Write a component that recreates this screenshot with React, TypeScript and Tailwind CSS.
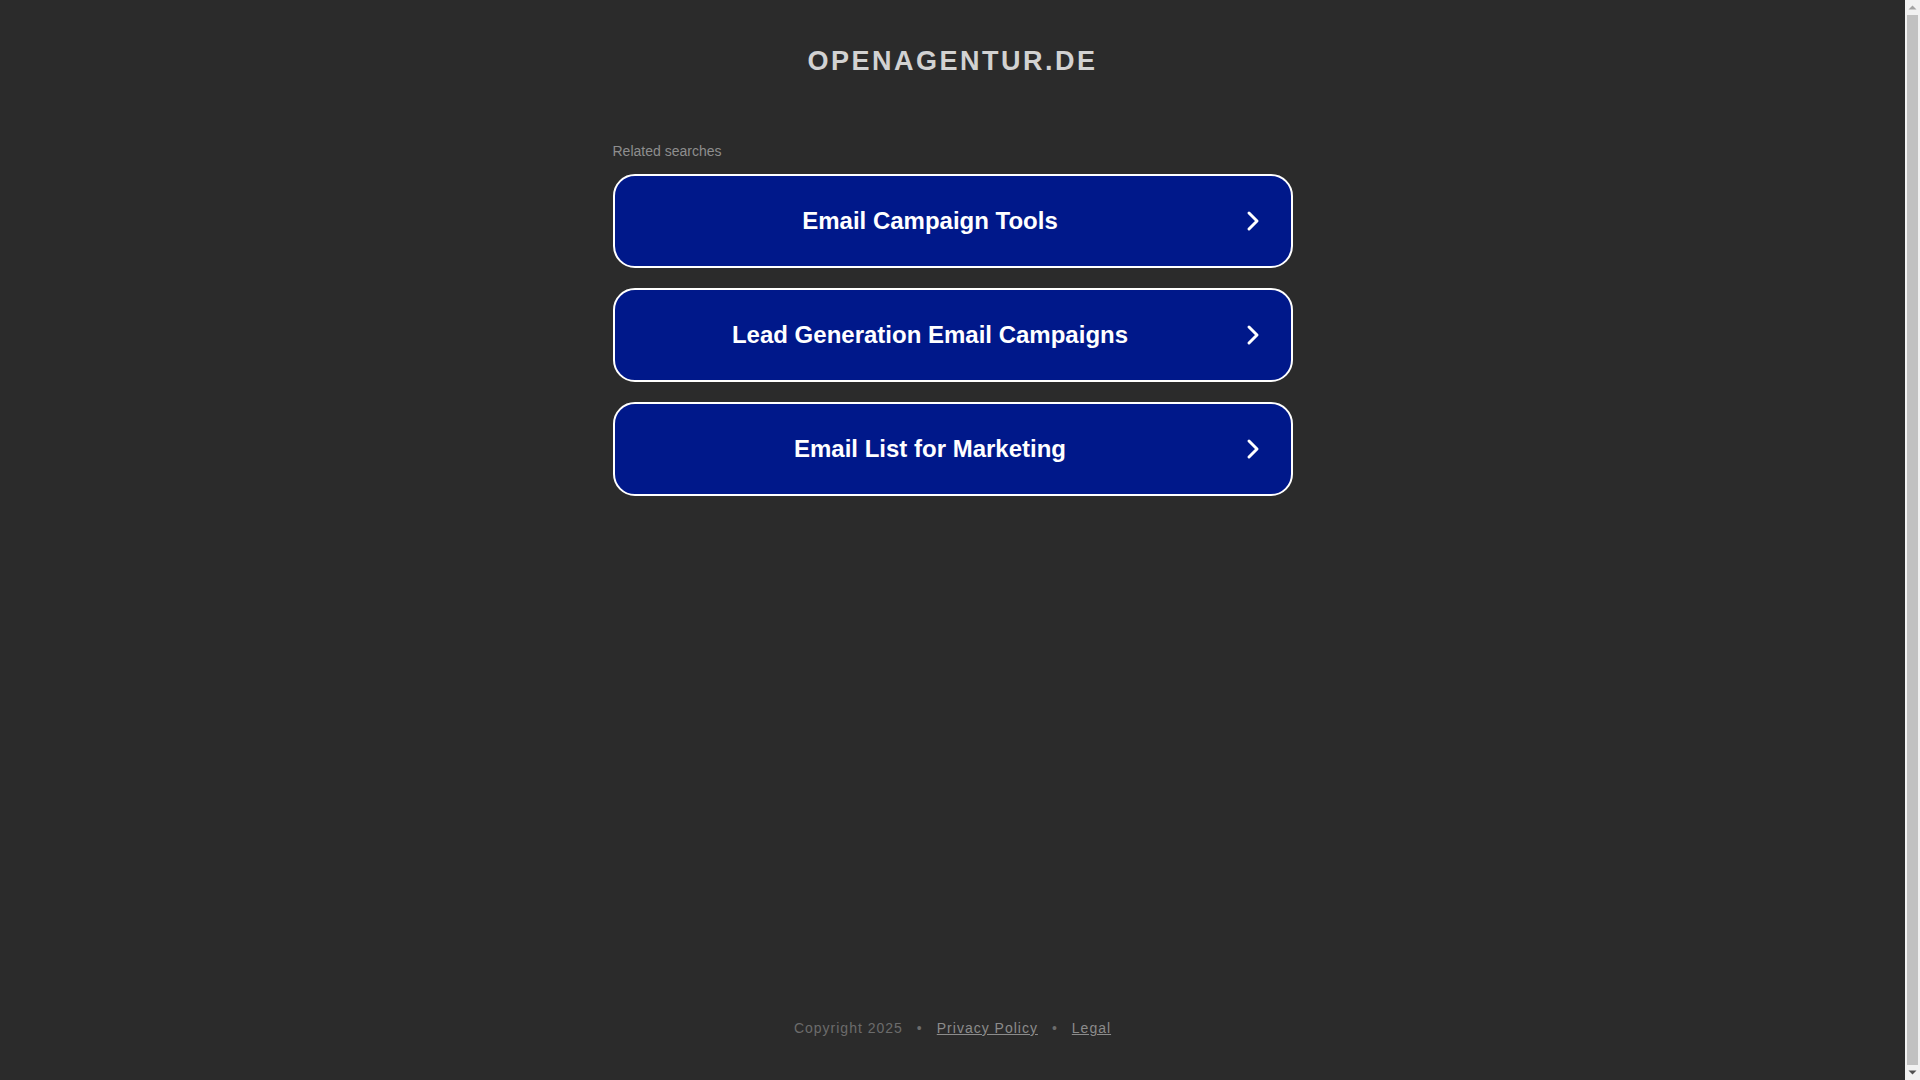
import React from "react";

const items = ["Email Campaign Tools", "Lead Generation Email Campaigns", "Email List for Marketing"];

function ScrollBar() {
  return (
    <div className="flex h-[1080px] w-[15px] shrink-0 flex-col items-center bg-[#f1f1f1]">
      <svg width="15" height="15" viewBox="0 0 15 15" className="shrink-0">
        <path d="M3.5 9.5 L7.5 5.5 L11.5 9.5 Z" fill="#a3a3a3" />
      </svg>
      <div className="w-[11px] flex-1 bg-[#c1c1c1]" />
      <svg width="15" height="15" viewBox="0 0 15 15" className="shrink-0">
        <path d="M3.5 5.5 L7.5 9.5 L11.5 5.5 Z" fill="#505050" />
      </svg>
    </div>
  );
}

export default function App() {
  return (
    <div
      className="flex h-[1080px] overflow-hidden bg-[#2b2b2b]"
      style={{ fontFamily: '"Liberation Sans", Arial, sans-serif' }}
    >
      <div className="flex h-[1080px] w-[1905px] flex-col">
        <div className="pt-[45px] text-center text-[27px] font-bold leading-[32px] tracking-[2.5px] text-[#d2d2d2]">
          OPENAGENTUR.DE
        </div>
        <div className="mx-auto mt-[66px] w-[680px]">
          <div className="text-[14px] leading-[16px] text-[#8e8e8e]">Related searches</div>
          <div className="mt-[15px] flex flex-col gap-[20px]">
            {items.map((t) => (
              <a
                key={t}
                href="#"
                className="flex h-[94px] items-center rounded-[22px] border-2 border-white bg-[#00188a] pr-[31px] text-white"
              >
                <span className="flex-1 text-center text-[24px] font-bold leading-[28px]">{t}</span>
                <svg width="14" height="22" viewBox="0 0 14 22" fill="none" className="shrink-0">
                  <path d="M3 3 L11 11 L3 19" stroke="white" strokeWidth="3" strokeLinecap="round" strokeLinejoin="round" />
                </svg>
              </a>
            ))}
          </div>
        </div>
        <div className="mt-auto pb-[42px] text-center text-[14px] leading-[20px] tracking-[1px] text-[#6c6c6c]">
          <span>Copyright 2025</span>
          <span className="mx-[14px]">•</span>
          <a href="#" className="text-[#8c8c8c] underline">Privacy Policy</a>
          <span className="mx-[14px]">•</span>
          <a href="#" className="text-[#8c8c8c] underline">Legal</a>
        </div>
      </div>
      <ScrollBar />
    </div>
  );
}
